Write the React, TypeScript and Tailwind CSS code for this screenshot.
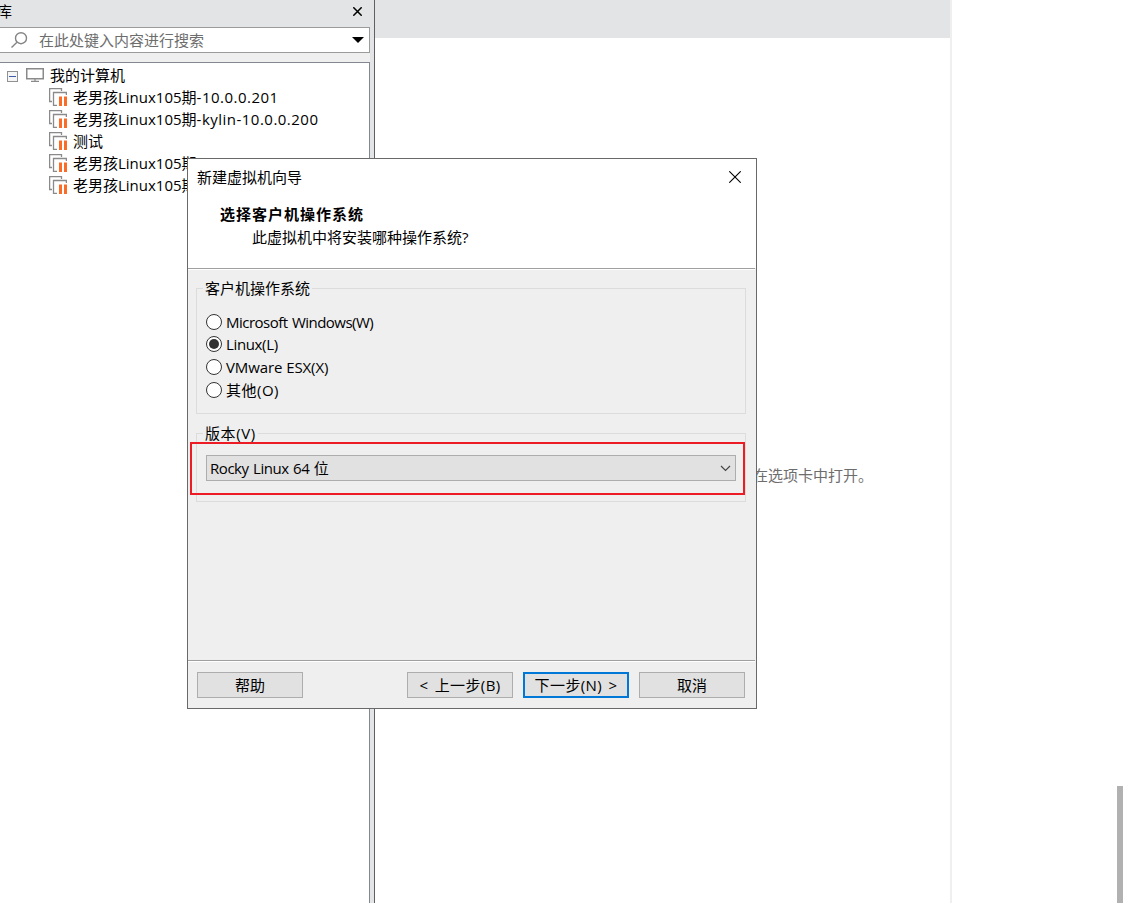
import { useState } from "react";

const machines = [
	{ name: "老男孩Linux105期", suffix: "-10.0.0.201" },
	{ name: "老男孩Linux105期", suffix: "-kylin-10.0.0.200" },
	{ name: "测试", suffix: "" },
	{ name: "老男孩Linux105期", suffix: "-centos-10.0.0.200" },
	{ name: "老男孩Linux105期", suffix: "" },
];

const systems = [
	{ id: "windows", label: "Microsoft Windows(W)", className: "h-[22px] tracking-[-0.52px] [word-spacing:1px]" },
	{ id: "linux", label: "Linux(L)", className: "h-[22px] tracking-[-0.35px]" },
	{ id: "esx", label: "VMware ESX(X)", className: "h-[24px] tracking-[-0.1px]" },
	{ id: "other", label: "其他(O)", className: "h-[22px] tracking-[0.5px]" },
];

const MachineIcon = () => (
	<svg width="18" height="18" viewBox="0 0 18 18" fill="none" className="shrink-0">
		<path d="M12.5 3V0.6H0.6V13.5H3" stroke="#8a8a8a" strokeWidth="1.3" />
		<path d="M17.4 7V4.5H4.5V17.4H8" stroke="#8a8a8a" strokeWidth="1.3" />
		<path d="M10 8.5h3V18h-3zM15 8.5h3V18h-3z" fill="#fb6d26" />
	</svg>
);

const Sidebar = () => (
	<aside className="flex w-[375px] shrink-0 flex-col border-r border-[#5f6062] bg-[#e3e4e6]">
		<div className="flex h-[27px] items-start justify-between pr-3">
			<span className="-ml-[3px] mt-px text-[15px] leading-5">库</span>
			<svg width="9" height="9" viewBox="0 0 9 9" className="mt-[7px]" fill="none" stroke="#000" strokeWidth="1.5">
				<path d="M0.3 0.3l8.4 8.4M8.7 0.3l-8.4 8.4" />
			</svg>
		</div>
		<div className="flex h-[26px] w-[370px] items-center border border-l-0 border-[#9b9b9b] bg-white pl-[11px] pr-[5px]">
			<svg width="17" height="17" viewBox="0 0 17 17" fill="none" stroke="#858585" strokeWidth="1.4">
				<circle cx="10" cy="6.2" r="5.5" />
				<path d="M6 10.2L0.5 15.6" />
			</svg>
			<span className="ml-[11px] text-[15px] leading-5 text-[#6d6d6d]">在此处键入内容进行搜索</span>
			<svg width="12" height="6" viewBox="0 0 12 6" className="ml-auto">
				<path d="M0 0h12l-6 6z" fill="#000" />
			</svg>
		</div>
		<div className="h-[9px] w-[370px] bg-[#efefef]" />
		<div className="w-[370px] grow border-r border-t border-[#828790] bg-white pt-px">
			<div className="flex h-[22px] items-center pl-[7px]">
				<svg width="11" height="11" viewBox="0 0 11 11" className="mt-[3px]">
					<rect x="0.5" y="0.5" width="10" height="10" fill="#f5f5f5" stroke="#919191" />
					<path d="M2 5.5h7" stroke="#3c5ba9" />
				</svg>
				<svg width="18" height="14" viewBox="0 0 18 14" className="ml-2" fill="none" stroke="#8a8a8a">
					<rect x="0.75" y="0.75" width="16.5" height="10" strokeWidth="1.5" />
					<path d="M9 11v2M5 13.4h8" strokeWidth="1.2" />
				</svg>
				<span className="ml-[6px] text-[15px]">我的计算机</span>
			</div>
			{machines.map((machine, index) => (
				<div key={index} className="flex h-[22px] items-center pl-[49px]">
					<MachineIcon />
					<span className="ml-[6px] whitespace-nowrap text-[15px]">
						{machine.name}
						<span className="tracking-[0.48px]">{machine.suffix}</span>
					</span>
				</div>
			))}
		</div>
	</aside>
);

const Divider = () => <div className="mr-px h-[2px] shrink-0 border-b border-t border-b-white border-t-[#a0a0a0]" />;

const Wizard = () => {
	const [selected, setSelected] = useState("linux");

	return (
		<div className="absolute left-[187px] top-[158px] flex h-[551px] w-[570px] flex-col border border-[#696969] bg-[#efefef] text-[15px]">
			<div className="h-[109px] bg-white">
				<div className="flex h-[36px] items-center justify-between pl-[9px] pr-[15px]">
					<span>新建虚拟机向导</span>
					<svg width="12" height="12" viewBox="0 0 12 12" fill="none" stroke="#000" strokeWidth="1.1">
						<path d="M0.3 0.3l11.4 11.4M11.7 0.3l-11.4 11.4" />
					</svg>
				</div>
				<h1 className="ml-[32px] mt-[8px] text-[15px] font-bold leading-[22px] tracking-[1px]">选择客户机操作系统</h1>
				<p className="ml-[64px] text-[15px] leading-6">此虚拟机中将安装哪种操作系统?</p>
			</div>
			<Divider />
			<div className="flex grow flex-col pl-[8px] pr-[10px] pt-[6px]">
				<fieldset className="h-[138px] border border-[#dcdcdc] pl-[9px]">
					<legend className="-ml-[3px] h-6 px-[2px] leading-6">客户机操作系统</legend>
					<div className="pt-[11px]">
						{systems.map((system) => (
							<label key={system.id} className={`flex items-center ${system.className}`}>
								<input type="radio" name="system" checked={selected === system.id} onChange={() => setSelected(system.id)} className="sr-only" />
								<span className="flex size-4 items-center justify-center rounded-full border border-[#333] bg-white">
									{selected === system.id && <span className="size-[10px] rounded-full bg-[#333]" />}
								</span>
								<span className="ml-1">{system.label}</span>
							</label>
						))}
					</div>
				</fieldset>
				<fieldset className="relative mt-[7px] h-[81px] border border-[#dcdcdc] pl-[9px] pr-[9px]">
					<legend className="-ml-[3px] h-6 px-[2px] leading-6 tracking-[0.6px]">版本(V)</legend>
					<button type="button" className="mt-[10px] flex h-[26px] w-full items-center justify-between border border-[#adadad] bg-[#e1e1e1] pl-[3px] pr-[4px]">
						<span className="tracking-[-0.45px] [word-spacing:1px]">Rocky Linux 64 位</span>
						<svg width="11" height="7" viewBox="0 0 11 7" fill="none" stroke="#444" strokeWidth="1.2">
							<path d="M1 1L5.5 5.5L10 1" />
						</svg>
					</button>
					<div className="absolute -left-[7px] -top-[3px] h-[53px] w-[555px] border-2 border-[#ed1c24]" />
				</fieldset>
			</div>
			<Divider />
			<div className="flex h-[46px] shrink-0 items-start pl-[9px] pt-[10px]">
				<button type="button" className="h-[26px] w-[106px] border border-[#adadad] bg-[#e1e1e1]">帮助</button>
				<button type="button" className="ml-[104px] h-[26px] w-[106px] border border-[#adadad] bg-[#e1e1e1] tracking-[0.4px] [word-spacing:2px]">&lt; 上一步(B)</button>
				<button type="button" className="ml-[10px] h-[26px] w-[106px] border-2 border-[#0078d7] bg-[#e1e1e1] tracking-[0.4px] [word-spacing:2px]">下一步(N) &gt;</button>
				<button type="button" className="ml-[10px] h-[26px] w-[106px] border border-[#adadad] bg-[#e1e1e1]">取消</button>
			</div>
		</div>
	);
};

const App = () => {
	return (
		<div className="relative flex h-[903px] w-[1123px] overflow-hidden bg-white font-['Open_Sans','Noto_Sans_CJK_SC',sans-serif] text-black">
			<Sidebar />
			<main className="flex w-[577px] flex-col border-r-2 border-[#efeff0]">
				<div className="h-[38px] bg-[#e3e4e6]" />
				<p className="ml-[378px] mt-[426px] text-[15px] leading-[22px] text-[#6d6d6d]">在选项卡中打开。</p>
			</main>
			<div className="ml-auto mt-[786px] w-[6px] bg-[#b1b1b1]" />
			<Wizard />
		</div>
	);
};

export default App;
